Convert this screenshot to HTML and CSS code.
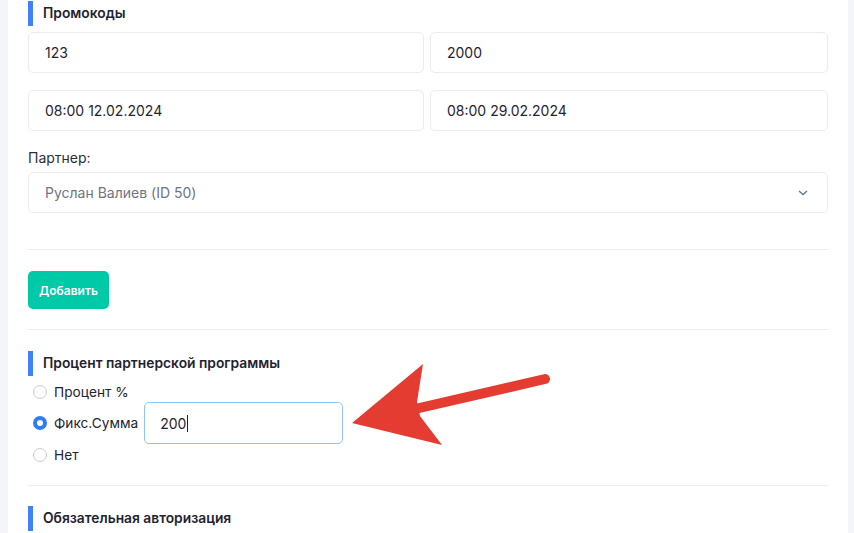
FILE: index.html
```html
<!DOCTYPE html>
<html lang="ru">

<head>
  <meta charset="UTF-8">
  <meta name="viewport" content="width=device-width, initial-scale=1.0">
  <title>Промокоды</title>
  <link rel="stylesheet" href="styles.css">
</head>

<body>

  <div class="page">
    <div class="card">

      <section class="block">
        <h3 class="block-title">Промокоды</h3>
        <div class="grid-2">
          <div class="field">123</div>
          <div class="field">2000</div>
          <div class="field">08:00 12.02.2024</div>
          <div class="field">08:00 29.02.2024</div>
        </div>
        <div class="field-label">Партнер:</div>
        <div class="field select">
          <span class="muted">Руслан Валиев (ID 50)</span>
          <svg class="chevron" width="10" height="6" viewBox="0 0 10 6">
            <path d="M1 1 L5 4.5 L9 1" fill="none" stroke="#6b7891" stroke-width="1.4" />
          </svg>
        </div>
      </section>

      <hr class="divider first">

      <button class="btn-add">Добавить</button>

      <hr class="divider">

      <section class="block partner">
        <h3 class="block-title">Процент партнерской программы</h3>
        <div class="radios">
          <div class="radio-row">
            <span class="radio"></span>
            <span>Процент %</span>
          </div>
          <div class="radio-row">
            <span class="radio checked"></span>
            <span>Фикс.Сумма</span>
            <div class="field amount">200<span class="caret"></span></div>
          </div>
          <div class="radio-row">
            <span class="radio"></span>
            <span>Нет</span>
          </div>
        </div>
      </section>

      <hr class="divider">

      <section class="block last">
        <h3 class="block-title">Обязательная авторизация</h3>
      </section>

    </div>
  </div>

  <!-- annotation arrow over the form -->
  <svg class="arrow" width="854" height="533" viewBox="0 0 854 533">
    <line x1="415" y1="409" x2="545" y2="379" stroke="#e53c31" stroke-width="10" stroke-linecap="round" />
    <polygon points="352,423 423,364 417,402 420,416 442,445" fill="#e53c31" />
  </svg>

</body>

</html>
```

FILE: styles.css
```css
body {
  margin: 0;
  padding: 0;
  font-family: 'Inter', 'Noto Sans', sans-serif;
  background: #f4f5f8;
  color: #1f2430;
  overflow: hidden;
}

.page {
  height: 533px;
  padding-left: 8px;
}

.card {
  width: 840px;
  height: 533px;
  box-sizing: border-box;
  background: #fff;
  padding: 1px 20px 0;
}

.block-title {
  margin: 0;
  height: 25px;
  line-height: 25px;
  border-left: 5px solid #3d82f7;
  padding-left: 10px;
  font-size: 13.8px;
  font-weight: 600;
  color: #1f2430;
}

.block .block-title {
  margin-bottom: 6px;
}

.grid-2 {
  display: grid;
  grid-template-columns: 396px 1fr;
  column-gap: 6px;
  row-gap: 17px;
}

.field {
  height: 41px;
  box-sizing: border-box;
  border: 1px solid #eaecf0;
  border-radius: 5px;
  padding: 0 16px;
  display: flex;
  align-items: center;
  font-size: 14px;
  color: #1f2430;
}

.field-label {
  margin-top: 17px;
  margin-bottom: 4px;
  line-height: 20px;
  font-size: 14px;
  color: #2b2f38;
}

.select {
  justify-content: space-between;
}

.muted {
  color: #70757f;
}

.chevron {
  margin-right: 3px;
}

.divider {
  border: none;
  border-top: 1px solid #eceef1;
  margin: 20px 0 0;
}

.divider.first {
  margin-top: 36px;
}

.btn-add {
  display: block;
  margin-top: 21px;
  width: 81px;
  height: 38px;
  border: none;
  border-radius: 5px;
  background: #00c9a7;
  color: #fff;
  font-family: inherit;
  font-size: 12px;
  font-weight: 600;
}

.partner {
  margin-top: 21px;
}

.partner .block-title {
  margin-bottom: 6px;
}

.radios {
  display: flex;
  flex-direction: column;
  padding-left: 5px;
  font-size: 13.7px;
  color: #1f2430;
}

.radio-row {
  display: flex;
  align-items: center;
  gap: 7px;
  min-height: 20px;
}

.radio-row:last-child {
  height: 21px;
}

.radio {
  width: 14px;
  height: 14px;
  box-sizing: border-box;
  border: 1px solid #c9cdd3;
  border-radius: 50%;
  background: #fff;
}

.radio.checked {
  border: 4px solid #2f7cf6;
}

.amount {
  width: 199px;
  height: 42px;
  margin-left: -1px;
  border-color: #8ec5f2;
  padding-left: 15px;
}

.caret {
  display: inline-block;
  width: 1px;
  height: 17px;
  background: #1f2430;
  margin-left: 1px;
}

.last {
  margin-top: 20px;
}

.arrow {
  position: absolute;
  left: 0;
  top: 0;
  pointer-events: none;
}
```
